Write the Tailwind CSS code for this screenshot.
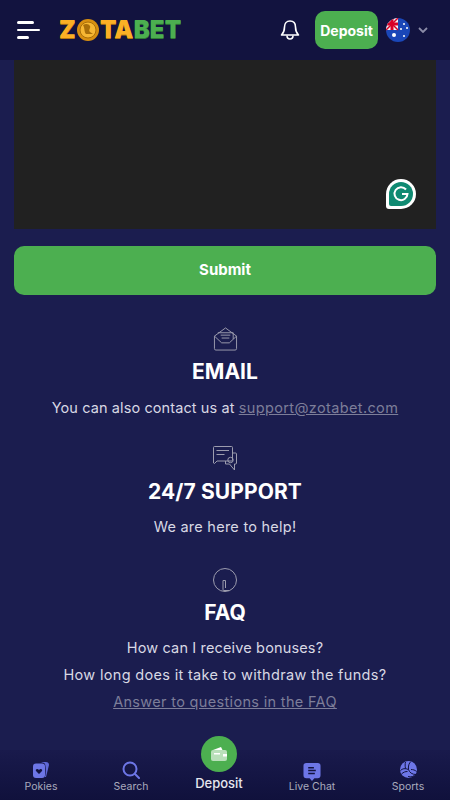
<!DOCTYPE html>
<html lang="en">
<head>
    <meta charset="UTF-8">
    <meta name="viewport" content="width=device-width, initial-scale=1.0">
    <title>Zotabet - Contact</title>
    <script src="https://cdn.jsdelivr.net/npm/@tailwindcss/browser@4"></script>
</head>
<body class="h-[800px] overflow-hidden bg-[#1b1d4f] font-['Inter',sans-serif] text-[#d8d8e4]">

<div class="relative flex h-[800px] w-[450px] flex-col">
    <!-- header -->
    <header class="flex h-[60px] shrink-0 items-center bg-[#12133f]">
        <button class="ml-[17px] flex w-[24px] flex-col gap-[5px]">
            <span class="h-[2.5px] w-[17px] rounded-full bg-white"></span>
            <span class="h-[2.5px] w-[23px] rounded-full bg-white"></span>
            <span class="h-[2.5px] w-[12px] rounded-full bg-white"></span>
        </button>
        <a class="ml-[18px] flex items-center text-[24px] leading-none font-black tracking-[0.2px]">
            <span class="text-[#fbb025] [text-shadow:0_1px_0_#b5770f]">Z</span>
            <svg class="mx-[1px]" width="22" height="22" viewBox="0 0 22 22">
                <circle cx="11" cy="11" r="11" fill="#d88f10"/>
                <circle cx="11" cy="11" r="8" fill="#f7b733" stroke="#a96f0a"/>
                <path d="M6 6c3-2 6-1 7 1s-2 4 0 6l3 2H9C7 13 8 9 6 6z" fill="#a96f0a"/>
            </svg>
            <span class="text-[#fbb025] [text-shadow:0_1px_0_#b5770f]">TA</span>
            <span class="text-[#4caf50] [text-shadow:0_1px_0_#2f7d33]">BET</span>
        </a>
        <svg class="ml-auto" width="20" height="22" viewBox="0 0 20 22" fill="none" stroke="#fff" stroke-width="1.6" stroke-linejoin="round">
            <path d="M10 2c-3.500 0-5.500 2.500-5.500 6 0 4-1 6-3 8h17c-2-2-3-4-3-8 0-3.500-2-6-5.500-6z"/>
            <path d="M7 16.500c0 2.500 1.500 3.500 3 3.500s3-1 3-3.500"/>
        </svg>
        <a class="ml-[15px] flex h-[38px] w-[63px] items-center justify-center rounded-[10px] bg-[#4caf50] text-[14px] font-bold text-white">Deposit</a>
        <svg class="ml-[8px]" width="24" height="24" viewBox="0 0 24 24">
            <defs><clipPath id="flag"><circle cx="12" cy="12" r="12"/></clipPath></defs>
            <g clip-path="url(#flag)">
                <rect width="24" height="24" fill="#1a47b8"/>
                <rect width="12" height="12" fill="#f0f0f0"/>
                <path d="M0 0l12 12M12 0L0 12" stroke="#d80027" stroke-width="1.500"/>
                <path d="M6 0v12M0 6h12" stroke="#d80027" stroke-width="3"/>
                <circle cx="8" cy="17" r="2" fill="#fff"/>
                <circle cx="18" cy="6" r="1" fill="#fff"/>
                <circle cx="21" cy="10" r="1" fill="#fff"/>
                <circle cx="15" cy="11" r="1" fill="#fff"/>
                <circle cx="18" cy="18" r="1" fill="#fff"/>
            </g>
        </svg>
        <svg class="mr-[22px] ml-[8px]" width="10" height="6" viewBox="0 0 10 6" fill="none" stroke="#8b8ca8" stroke-width="1.800">
            <path d="M1 1l4 4 4-4"/>
        </svg>
    </header>

    <main class="flex flex-col px-[14px]">
        <div class="relative h-[169px] w-[422px] bg-[#212121]">
            <div class="absolute right-[20px] bottom-[20px] flex h-[30px] w-[30px] items-center justify-center rounded-[15px] rounded-bl-[3px] bg-white">
                <div class="flex h-[24px] w-[24px] items-center justify-center rounded-[12px] rounded-bl-[2px] bg-[#0f8a72]">
                    <svg width="18" height="18" viewBox="0 0 18 18" fill="none" stroke="#fff" stroke-width="2">
                        <path d="M14 4.500A6.500 6.500 0 1 0 15.500 9H10"/>
                    </svg>
                </div>
            </div>
        </div>
        <button class="mt-[17px] h-[49px] w-[422px] rounded-[10px] bg-[#4caf50] text-[15px] font-bold text-white">Submit</button>

        <section class="mt-[31px] flex flex-col items-center">
            <svg width="25" height="26" viewBox="0 0 26 26" fill="none" stroke="#9c9cae" stroke-width="1">
                <path d="M1.500 10L13 1.500 24.500 10v13a1.500 1.500 0 0 1-1.500 1.500H3A1.500 1.500 0 0 1 1.500 23z"/>
                <path d="M1.500 10L9 17h8l7.500-7M5 6.500h16v6.500M8 9h10M9 12h8"/>
            </svg>
            <h2 class="mt-[7px] text-[21px] leading-[26px] font-bold text-white">EMAIL</h2>
            <p class="mt-[13px] text-[14.5px] leading-[20px] tracking-[0.1px]">You can also contact us at <a class="tracking-[0.37px] text-[#7d7e99] underline">support@zotabet.com</a></p>
        </section>

        <section class="mt-[28px] flex flex-col items-center">
            <svg width="24" height="25" viewBox="0 0 24 25" fill="none" stroke="#9c9cae" stroke-width="1">
                <path d="M1.500.500h17a1 1 0 0 1 1 1v12.500a1 1 0 0 1-1 1H4l-2.500 2.500-1-.5V1.500a1 1 0 0 1 1-1z"/>
                <path d="M3.500 4.500h12.500M3.500 8.500h8"/>
                <path d="M19.500 7h3a1 1 0 0 1 1 1v9a1 1 0 0 1-1 1h-1v6l-5-6h-4v-3"/>
                <circle cx="17.500" cy="14" r="2.700"/>
            </svg>
            <h2 class="mt-[8px] text-[21px] leading-[26px] font-bold tracking-[0.1px] text-white">24/7 SUPPORT</h2>
            <p class="mt-[12px] text-[14.5px] leading-[20px] tracking-[0.25px]">We are here to help!</p>
        </section>

        <section class="mt-[31px] flex flex-col items-center">
            <svg width="24" height="24" viewBox="0 0 24 24" fill="none" stroke="#9c9cae" stroke-width="1">
                <circle cx="12" cy="12" r="11.500"/>
                <path d="M10 12.500v9a1 1 0 0 0 1 1h5.500M10 12.500h2.500v7.500"/>
            </svg>
            <h2 class="mt-[8px] text-[21px] leading-[26px] font-bold text-white">FAQ</h2>
            <p class="mt-[12px] text-[14.5px] leading-[20px] tracking-[0.15px]">How can I receive bonuses?</p>
            <p class="mt-[7px] text-[14.5px] leading-[20px] tracking-[0.32px]">How long does it take to withdraw the funds?</p>
            <a class="mt-[7px] text-[14.5px] leading-[20px] tracking-[0.33px] text-[#7d7e99] underline">Answer to questions in the FAQ</a>
        </section>
    </main>

    <!-- bottom nav -->
    <nav class="absolute right-0 bottom-0 left-0 grid h-[50px] grid-cols-[82px_98px_78px_108px_84px] bg-gradient-to-b from-[#191a4c] to-[#10113c] text-[10.5px] text-[#a9aabd]">
        <a class="flex flex-col items-center">
            <svg class="mt-[11px]" width="18" height="18" viewBox="0 0 18 18">
                <path d="M9 1h5a3 3 0 0 1 3 3l-3 12-1 0c1-4 1-10 0-13-.5-1-2-1.500-4-2z" fill="#5f68d8"/>
                <rect x="1" y="2.500" width="12" height="14.500" rx="3" fill="#6d76e6"/>
                <path d="M7 13l-3-3c-1-1.500 1.500-3 3-1 1.500-2 4-.5 3 1z" fill="#12133f"/>
            </svg>
            <span class="mt-[2px] leading-[12px]">Pokies</span>
        </a>
        <a class="flex flex-col items-center">
            <svg class="mt-[11px]" width="18" height="18" viewBox="0 0 18 18" fill="none" stroke="#6d76e6" stroke-width="2">
                <circle cx="8" cy="8" r="6.500"/>
                <path d="M13 13l4 4" stroke-linecap="round"/>
            </svg>
            <span class="mt-[2px] leading-[12px]">Search</span>
        </a>
        <a class="relative flex flex-col items-center text-[13px] font-medium text-[#e6e6ee]">
            <span class="absolute top-[-14px] flex h-[36px] w-[36px] items-center justify-center rounded-full bg-[#4caf50]">
                <svg width="18" height="16" viewBox="0 0 18 16">
                    <path d="M3 4l8-3 1.500 3z" fill="#fff"/>
                    <rect x="1" y="4" width="16" height="11" rx="2" fill="#b9e0ba"/>
                    <rect x="4" y="7" width="6" height="1.500" fill="#fff"/>
                    <rect x="13" y="8" width="4" height="2.500" fill="#fff"/>
                </svg>
            </span>
            <span class="mt-[25px] leading-[16px]">Deposit</span>
        </a>
        <a class="flex flex-col items-center">
            <svg class="mt-[13px]" width="18" height="18" viewBox="0 0 18 19">
                <path d="M3 0h12a3 3 0 0 1 3 3v10a3 3 0 0 1-3 3h-3.500L9 19l-2.500-3H3a3 3 0 0 1-3-3V3a3 3 0 0 1 3-3z" fill="#6d76e6"/>
                <path d="M5 5h6M5 8h8M5 11h7" stroke="#12133f" stroke-width="1.500"/>
            </svg>
            <span class="leading-[12px]">Live Chat</span>
        </a>
        <a class="flex flex-col items-center">
            <svg class="mt-[11px]" width="17" height="17" viewBox="0 0 17 17" fill="#6d76e6">
                <circle cx="8.500" cy="8.500" r="8.500"/>
                <path d="M8.500 8.500C8 5 9 2 11 .5M5.500 1C5 3 5 5 5.500 7.500M8.500 8.500C5 7 2.500 7.500.5 9.500M1.500 13c2-2 4-2.500 6-2.500M8.500 8.500c1 3 3.500 5 7.500 5M8 15.500c3 1 6 0 7-2M11 8.500c2 0 4 .5 5.500 2" fill="none" stroke="#12133f" stroke-width="1"/>
            </svg>
            <span class="mt-[3px] leading-[12px]">Sports</span>
        </a>
    </nav>
</div>

</body>
</html>
